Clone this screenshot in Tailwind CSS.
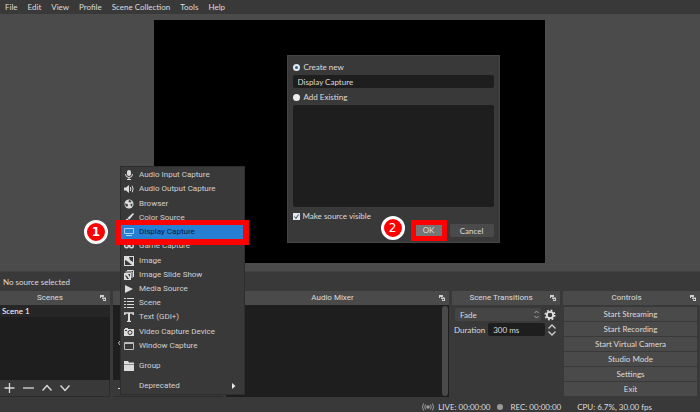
<!DOCTYPE html>
<html lang="en">
<head>
  <meta charset="UTF-8" />
  <meta name="viewport" content="width=device-width, initial-scale=1.0"/>
  <title>OBS Studio</title>
  <script src="https://cdn.jsdelivr.net/npm/@tailwindcss/browser@4"></script>
</head>
<body class="relative flex h-screen flex-col overflow-hidden bg-[#3a393a] font-[Lato,'Noto_Sans',sans-serif] text-[8px] leading-[12px] text-[#dcdcdc]">

  <!-- Shared icon -->
  <svg class="hidden">
    <symbol id="float" viewBox="0 0 6 6">
      <path d="M0 0h4v2H1v1H0z" fill="#cfcfcf"/>
      <path d="M2 2.500h4V6H3V4H2z" fill="#cfcfcf"/>
      <path d="M3.500 4h1.500v1H3.500z" fill="#4a4a4a"/>
    </symbol>
  </svg>

  <!-- Menu bar -->
  <nav class="flex h-[14px] shrink-0 items-center gap-[10px] px-[5px]">
    <a href="#">File</a>
    <a href="#">Edit</a>
    <a href="#">View</a>
    <a href="#">Profile</a>
    <a href="#">Scene Collection</a>
    <a href="#">Tools</a>
    <a href="#">Help</a>
  </nav>

  <!-- Preview -->
  <main class="flex min-h-0 flex-1 justify-center bg-[#4b4b4b] pt-[6px] pr-[2px] pb-[8px]">
    <div class="relative aspect-[391/243] h-full bg-black">

      <!-- Create source dialog -->
      <form class="absolute top-[35px] left-[133px] flex w-[213px] flex-col border border-[#454445] bg-[#3a393a] px-[5px] pt-[5px] pb-[1px]">
        <label class="flex h-[12px] items-center gap-[4px]">
          <input type="radio" name="mode" checked class="size-[7px] appearance-none rounded-full border border-[#e0e8ee] bg-[#e8eef2] checked:border-2 checked:bg-[#2c6a96]">
          Create new
        </label>
        <input type="text" value="Display Capture" aria-label="Source name" class="mt-[2px] h-[13px] w-full rounded-[2px] bg-[#1f1e1f] px-[5px]">
        <label class="mt-[3px] flex h-[12px] items-center gap-[4px]">
          <input type="radio" name="mode" class="size-[7px] appearance-none rounded-full bg-[#eeeeee]">
          Add Existing
        </label>
        <div class="mt-[2px] h-[102px] rounded-[2px] bg-[#1f1e1f]"></div>
        <label class="mt-[3px] flex h-[12px] items-center gap-[3px]">
          <span class="relative size-[7px]">
            <input type="checkbox" checked class="block size-[7px] appearance-none bg-[#e4e8ee]">
            <svg class="absolute inset-0 size-[7px]" viewBox="0 0 7 7"><path d="M1.500 3.500l1.500 2 2.500-4" fill="none" stroke="#30445c"/></svg>
          </span>
          Make source visible
        </label>
        <div class="mt-[-2px] flex items-center justify-end gap-[3px]">
          <div class="relative border-[5px] border-[#fe0000]">
            <button type="button" class="block h-[11px] w-[26px] bg-[#777677] text-center leading-[11px]">OK</button>
            <span class="absolute top-[-9px] left-[-35px] flex size-[24px] items-center justify-center rounded-full border-[3px] border-white bg-[#fe0000] font-['DejaVu_Sans'] text-[12px] text-white">2</span>
          </div>
          <button type="button" class="h-[13px] w-[44px] rounded-[2px] bg-[#4b4a4b]">Cancel</button>
        </div>
      </form>
    </div>
  </main>

  <p class="flex h-[20px] shrink-0 items-center border-t border-[#424142] px-[3px]">No source selected</p>

  <!-- Docks -->
  <div class="grid h-[106px] shrink-0 grid-cols-[110fr_110fr_223fr_108fr_137fr] gap-x-[3px]">
    <section class="flex flex-col">
      <h2 class="flex h-[14px] items-center bg-[#4a4a4a] pr-[4px] font-[Roboto]"><span class="flex-1 text-center">Scenes</span><svg class="size-[6px]"><use href="#float"/></svg></h2>
      <div class="flex-1 bg-[#1f1e1f]">
        <div class="h-[12px] bg-[#272627] px-[2px] text-white">Scene 1</div>
      </div>
      <div class="flex h-[17px] items-center gap-[8px] border-r border-b border-[#2d2c2d] px-[4px]">
        <button aria-label="Add scene"><svg class="h-[10px] w-[11px]" viewBox="0 0 11 10"><path d="M0.500 5h10M5.500 0v10" stroke="#d8d8d8" stroke-width="1.300"/></svg></button>
        <button aria-label="Remove scene"><svg class="h-[10px] w-[11px]" viewBox="0 0 11 10"><path d="M0 5h11" stroke="#d8d8d8" stroke-width="1.300"/></svg></button>
        <button aria-label="Move scene up"><svg class="h-[10px] w-[10px]" viewBox="0 0 10 10"><path d="M0.500 7.500L5 2.500l4.500 5" fill="none" stroke="#d8d8d8" stroke-width="1.500"/></svg></button>
        <button aria-label="Move scene down"><svg class="h-[10px] w-[10px]" viewBox="0 0 10 10"><path d="M0.500 2.500L5 7.500l4.500-5" fill="none" stroke="#d8d8d8" stroke-width="1.500"/></svg></button>
      </div>
    </section>

    <section class="flex flex-col" aria-label="Sources">
      <h2 class="h-[14px] bg-[#4a4a4a]"></h2>
      <div class="flex flex-1 items-center bg-[#1f1e1f] px-[5px]">
        <svg class="h-[4px] w-[2px]" viewBox="0 0 2 4"><path d="M2 0q-3 2 0 4" fill="none" stroke="#bdbdbd"/></svg>
      </div>
      <div class="flex h-[17px] items-center border-b border-[#2d2c2d] px-[4px]">
        <button aria-label="Add source"><svg class="h-[10px] w-[4px]" viewBox="0 0 4 10"><path d="M1 5.500h2.500" stroke="#d8d8d8"/></svg></button>
      </div>
    </section>

    <section class="flex flex-col">
      <h2 class="flex h-[14px] items-center bg-[#4a4a4a] pr-[4px] font-[Roboto]"><span class="flex-1 text-center">Audio Mixer</span><svg class="size-[6px]"><use href="#float"/></svg></h2>
      <div class="flex flex-1 justify-end bg-[#1f1e1f] p-[1px]">
        <div class="w-[6px] rounded-full bg-[#4b4a4b]"></div>
      </div>
    </section>

    <section class="flex flex-col">
      <h2 class="flex h-[14px] items-center bg-[#4a4a4a] pr-[4px] font-[Roboto]"><span class="flex-1 text-center">Scene Transitions</span><svg class="size-[6px]"><use href="#float"/></svg></h2>
      <div class="mt-[3px] flex items-center gap-[3px] pr-[4px] pl-[3px]">
        <div class="relative flex-1">
          <select aria-label="Transition" class="block h-[13px] w-full appearance-none rounded-[2px] bg-[#464546] px-[5px]"><option>Fade</option></select>
          <svg class="absolute top-[2px] right-[2px] h-[9px] w-[5px]" viewBox="0 0 5 9"><path d="M0.500 3l2-2 2 2M0.500 6l2 2 2-2" fill="none" stroke="#a8a8a8"/></svg>
        </div>
        <button aria-label="Transition properties"><svg class="size-[12px]" viewBox="0 0 12 12"><circle cx="6" cy="6" r="3.200" fill="none" stroke="#e0e0e0" stroke-width="1.800"/><circle cx="6" cy="6" r="4.700" fill="none" stroke="#e0e0e0" stroke-width="1.600" stroke-dasharray="1.850 1.840"/></svg></button>
      </div>
      <div class="mt-[2px] flex items-center gap-[3px] pr-[4px] pl-[2px]">
        <label for="duration">Duration</label>
        <input id="duration" type="text" value="300 ms" class="h-[13px] w-0 flex-1 rounded-[2px] bg-[#1f1e1f] px-[5px]">
        <svg class="h-[12px] w-[8px]" viewBox="0 0 8 12"><path d="M0.500 4.500L4 1l3.500 3.500M0.500 7.500L4 11l3.500-3.500" fill="none" stroke="#cfcfcf" stroke-width="1.300"/></svg>
      </div>
    </section>

    <section class="flex flex-col">
      <h2 class="flex h-[14px] items-center bg-[#4a4a4a] pr-[4px] font-[Roboto]"><span class="flex-1 text-center">Controls</span><svg class="size-[6px]"><use href="#float"/></svg></h2>
      <div class="mt-[2px] mr-[3px] ml-[1px] flex h-[89px] flex-col gap-[1px]">
        <button class="flex-1 bg-[#4b4a4b]">Start Streaming</button>
        <button class="flex-1 bg-[#4b4a4b]">Start Recording</button>
        <button class="flex-1 bg-[#4b4a4b]">Start Virtual Camera</button>
        <button class="flex-1 bg-[#4b4a4b]">Studio Mode</button>
        <button class="flex-1 bg-[#4b4a4b]">Settings</button>
        <button class="flex-1 bg-[#4b4a4b]">Exit</button>
      </div>
    </section>
  </div>

  <!-- Status bar -->
  <footer class="flex h-[15px] shrink-0 items-center justify-end pt-[4px] pr-[48px]">
    <svg class="mr-[4px] h-[8px] w-[12px]" viewBox="0 0 12 8"><circle cx="6" cy="4" r="1.800" fill="#9a9a9a"/><path d="M3.500 1.500q-1.500 2.500 0 5M1.500 0.500q-2 3.500 0 7M8.500 1.500q1.500 2.500 0 5M10.500 0.500q2 3.500 0 7" fill="none" stroke="#9a9a9a"/></svg>
    <span class="mr-[7px]">LIVE: 00:00:00</span>
    <span class="mr-[7px] size-[6px] rounded-full bg-[#9a9a9a]"></span>
    <span class="mr-[16px]">REC: 00:00:00</span>
    <span>CPU: 6.7%, 30.00 fps</span>
  </footer>

  <!-- Add source menu -->
  <div class="absolute bottom-[17px] left-[120px] w-[125px] border border-[#2e2d2e] bg-[#3a393a] py-[1px] font-[Roboto,'Noto_Sans',sans-serif] text-[#d0d0d0]">
    <ul class="flex h-[185px] flex-col">
      <li class="flex flex-1 items-center gap-[5px] px-[3px]">
        <svg class="size-[10px]" viewBox="0 0 10 10"><rect x="3" width="4" height="6" rx="2" fill="#dcdcdc"/><path d="M1.500 4q0 3.500 3.500 3.500T8.500 4M5 7.500V9.500M3 9.500h4" fill="none" stroke="#dcdcdc"/></svg>
        Audio Input Capture
      </li>
      <li class="flex flex-1 items-center gap-[5px] px-[3px]">
        <svg class="size-[10px]" viewBox="0 0 10 10"><path d="M0 3.500h2L5 1v8L2 6.500H0z" fill="#dcdcdc"/><path d="M6.300 3q1 2 0 4M8.200 1.800q1.800 3.200 0 6.400" fill="none" stroke="#dcdcdc"/></svg>
        Audio Output Capture
      </li>
      <li class="flex flex-1 items-center gap-[5px] px-[3px]">
        <svg class="size-[10px]" viewBox="0 0 10 10"><circle cx="5" cy="5" r="4.500" fill="#dcdcdc"/><path d="M1 4.500l2.500.5.5 1.500-1 1.500-1.500-1.500zM5 1l2.500 1-1 1.500-2-.5zM6.500 5l2-.5-.5 2.500-1 .5z" fill="#3a393a"/></svg>
        Browser
      </li>
      <li class="flex flex-1 items-center gap-[5px] px-[3px]">
        <svg class="size-[10px]" viewBox="0 0 10 10"><path d="M9 0l1 1-4.500 5.500-2-1.500zM3 5.500l2 1.500q0 2.500-4.500 2.500Q2 8.500 1.500 7z" fill="#dcdcdc"/></svg>
        Color Source
      </li>
      <li class="relative flex flex-1 items-center gap-[5px] bg-[#267fd2] px-[3px] text-[#06203c]">
        <svg class="size-[10px]" viewBox="0 0 10 10"><path d="M0.500 1.500h9v5h-9zM2 8.500h6" fill="none" stroke="#a8d0f4"/></svg>
        Display Capture
        <span class="absolute top-[-5px] right-[-5px] bottom-[-6px] left-[-6px] border-[6px] border-t-[5px] border-[#fe0000]"></span>
        <span class="absolute top-[-5px] left-[-37px] flex size-[24px] items-center justify-center rounded-full border-[3px] border-white bg-[#fe0000] font-['DejaVu_Sans'] text-[12px] font-bold text-white">1</span>
      </li>
      <li class="flex flex-1 items-center gap-[5px] px-[3px]">
        <svg class="size-[10px]" viewBox="0 0 10 10"><circle cx="2.500" cy="5" r="1.800" fill="none" stroke="#dcdcdc" stroke-width="1.400"/><circle cx="7.500" cy="5" r="1.800" fill="none" stroke="#dcdcdc" stroke-width="1.400"/><path d="M2 2.800h6" stroke="#dcdcdc"/></svg>
        Game Capture
      </li>
      <li class="flex flex-1 items-center gap-[5px] px-[3px]">
        <svg class="size-[10px]" viewBox="0 0 10 10"><path d="M0 0h10v10H0z" fill="#dcdcdc"/><path d="M1 4l2 1 5 4H1zM5 1h4v5L6 4z" fill="#3a393a"/></svg>
        Image
      </li>
      <li class="flex flex-1 items-center gap-[5px] px-[3px]">
        <svg class="size-[10px]" viewBox="0 0 10 10"><path d="M0 3h7v7H0z" fill="#dcdcdc"/><path d="M1.500 2h6.500v6M3 .5h6.500V7" fill="none" stroke="#dcdcdc"/><path d="M1 5l2 1 2 3H3zM4 4h2v3z" fill="#3a393a"/></svg>
        Image Slide Show
      </li>
      <li class="flex flex-1 items-center gap-[5px] px-[3px]">
        <svg class="size-[10px]" viewBox="0 0 10 10"><path d="M1 1l8 4-8 4z" fill="#dcdcdc"/></svg>
        Media Source
      </li>
      <li class="flex flex-1 items-center gap-[5px] px-[3px]">
        <svg class="size-[10px]" viewBox="0 0 10 10"><path d="M0 .5h2M3 .5h7M0 3.500h2M3 3.500h7M0 6.500h2M3 6.500h7M0 9.500h2M3 9.500h7" stroke="#dcdcdc"/></svg>
        Scene
      </li>
      <li class="flex flex-1 items-center gap-[5px] px-[3px]">
        <svg class="size-[10px]" viewBox="0 0 10 10"><path d="M.8 3V1h8.400v2" fill="none" stroke="#dcdcdc" stroke-width="1.500"/><path d="M5 1v8" stroke="#dcdcdc" stroke-width="2"/><path d="M3 9.400h4" stroke="#dcdcdc" stroke-width="1.200"/></svg>
        Text (GDI+)
      </li>
      <li class="flex flex-1 items-center gap-[5px] px-[3px]">
        <svg class="size-[10px]" viewBox="0 0 10 10"><path d="M0 2h1V1h3v1h6v7H0z" fill="#dcdcdc"/><circle cx="6" cy="5.500" r="2" fill="none" stroke="#3a393a"/><path d="M1 3.500h2" stroke="#3a393a"/></svg>
        Video Capture Device
      </li>
      <li class="flex flex-1 items-center gap-[5px] px-[3px]">
        <svg class="size-[10px]" viewBox="0 0 10 10"><path d="M.5 1.500h9v7h-9zM.5 2.500h9" fill="none" stroke="#bcbcbc"/></svg>
        Window Capture
      </li>
    </ul>
    <div class="mt-[6px] flex h-[14px] items-center gap-[5px] px-[3px]">
      <svg class="size-[10px]" viewBox="0 0 10 10"><path d="M0 0h4l1 1.500h5V3H0zM0 3.500h10V10H0z" fill="#dcdcdc"/></svg>
      Group
    </div>
    <div class="mt-[5px] flex h-[15px] items-center justify-between pr-[8px] pl-[18px]">
      Deprecated
      <svg class="h-[6px] w-[4px]" viewBox="0 0 4 6"><path d="M0 0l3.500 3L0 6z" fill="#e8e8e8"/></svg>
    </div>
  </div>
</body>
</html>
